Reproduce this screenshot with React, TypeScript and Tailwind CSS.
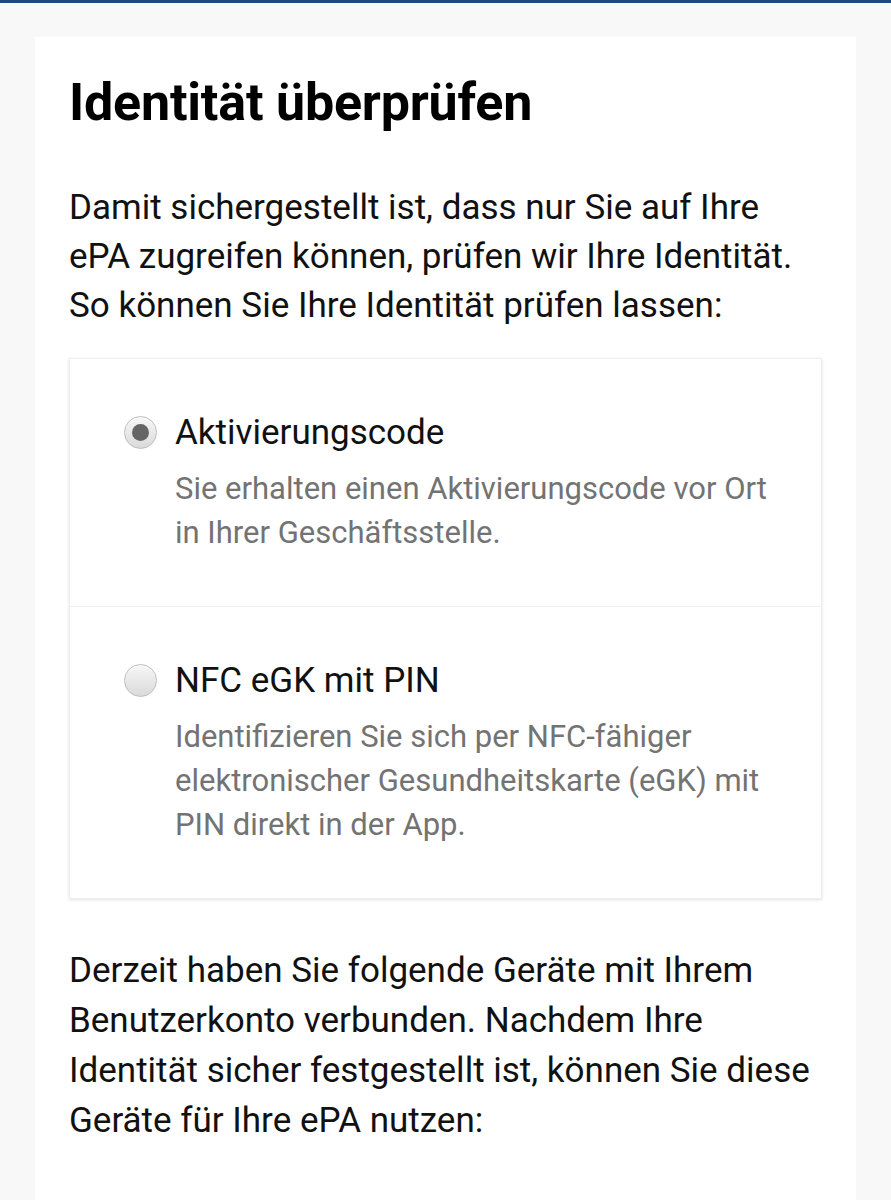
import React from "react";

type Option = {
  id: string;
  title: string;
  description: string;
  checked: boolean;
};

const options: Option[] = [
  {
    id: "code",
    title: "Aktivierungscode",
    description:
      "Sie erhalten einen Aktivierungscode vor Ort in Ihrer Geschäftsstelle.",
    checked: true,
  },
  {
    id: "nfc",
    title: "NFC eGK mit PIN",
    description:
      "Identifizieren Sie sich per NFC-fähiger elektronischer Gesundheitskarte (eGK) mit PIN direkt in der App.",
    checked: false,
  },
];

function Radio({ checked }: { checked: boolean }) {
  return (
    <span className="mt-[5px] flex h-[33px] w-[33px] shrink-0 items-center justify-center rounded-full border border-[#bdbdbd] bg-gradient-to-b from-[#f7f7f7] to-[#dadada] shadow-[inset_0_1px_1px_rgba(255,255,255,0.8)]">
      {checked && <span className="h-[17px] w-[17px] rounded-full bg-[#656565]" />}
    </span>
  );
}

export default function App() {
  return (
    <main
      className="min-h-[1200px] bg-[#f8f8f8] text-[#111]"
      style={{ fontFamily: "Roboto, 'Noto Sans', sans-serif" }}
    >
      <div className="h-[3px] bg-[#1d4c7c]" />
      <section className="mx-[35px] mt-[34px] min-h-[1163px] bg-white px-[34px] pt-[34px]">
        <h1 className="text-[52px] font-bold leading-[64px] tracking-[-0.2px] text-black">
          Identität überprüfen
        </h1>

        <p className="mt-[48px] text-[35px] leading-[49px]">
          Damit sichergestellt ist, dass nur Sie auf Ihre ePA zugreifen können,
          prüfen wir Ihre Identität. So können Sie Ihre Identität prüfen lassen:
        </p>

        <div className="mt-[28px] border border-[#eeeeee] bg-white shadow-[0_1px_3px_rgba(0,0,0,0.12)]">
          {options.map((opt, i) => (
            <label
              key={opt.id}
              className={`flex gap-[18px] pb-[51px] pl-[54px] pr-[40px] pt-[52px] ${
                i > 0 ? "border-t border-[#efefef]" : ""
              }`}
            >
              <Radio checked={opt.checked} />
              <div>
                <div className="text-[35px] leading-[44px]">{opt.title}</div>
                <p className="mt-[12px] max-w-[600px] text-[31px] leading-[44px] text-[#737373]">
                  {opt.description}
                </p>
              </div>
            </label>
          ))}
        </div>

        <p className="mt-[47px] text-[35px] leading-[50px]">
          Derzeit haben Sie folgende Geräte mit Ihrem Benutzerkonto verbunden.
          Nachdem Ihre Identität sicher festgestellt ist, können Sie diese Geräte
          für Ihre ePA nutzen:
        </p>
      </section>
    </main>
  );
}
